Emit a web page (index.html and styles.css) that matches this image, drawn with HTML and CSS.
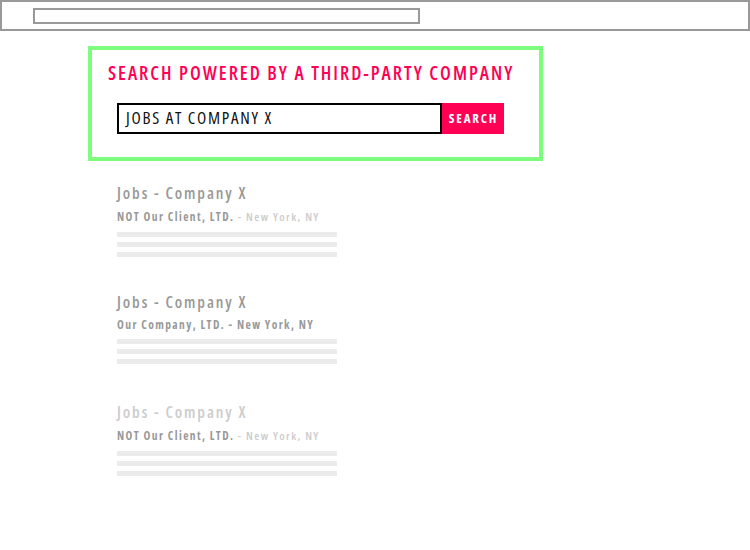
FILE: index.html
```html
<!DOCTYPE html>
<html>
<head>
<meta charset="utf-8">
<link rel="stylesheet" href="styles.css">
</head>
<body>
<header class="topbar">
  <div class="url-box"></div>
</header>
<main class="content">
  <section class="search-panel">
    <h1 class="panel-title">SEARCH POWERED BY A THIRD-PARTY COMPANY</h1>
    <div class="search-row">
      <div class="search-input">JOBS AT COMPANY X</div>
      <div class="search-btn">SEARCH</div>
    </div>
  </section>
  <ul class="results">
    <li class="result">
      <div class="r-title">Jobs - Company X</div>
      <div class="r-sub">NOT Our Client, LTD. <span class="loc">- New York, NY</span></div>
      <div class="r-lines"><span></span><span></span><span></span></div>
    </li>
    <li class="result ours">
      <div class="r-title">Jobs - Company X</div>
      <div class="r-sub">Our Company, LTD. - New York, NY</div>
      <div class="r-lines"><span></span><span></span><span></span></div>
    </li>
    <li class="result faded">
      <div class="r-title">Jobs - Company X</div>
      <div class="r-sub">NOT Our Client, LTD. <span class="loc">- New York, NY</span></div>
      <div class="r-lines"><span></span><span></span><span></span></div>
    </li>
  </ul>
</main>
</body>
</html>
```
FILE: styles.css
```css
* { box-sizing: border-box; }
html, body { margin: 0; padding: 0; background: #fff; }
body {
  font-family: "Open Sans", "DejaVu Sans Condensed", sans-serif;
  font-stretch: condensed;
  width: 750px;
}
.topbar {
  height: 31px;
  border: 2px solid #999;
  padding: 6px 0 0 31px;
}
.url-box {
  width: 387px;
  height: 16px;
  border: 2px solid #999;
}
.content {
  padding: 15px 0 0 88px;
}
.search-panel {
  width: 455px;
  height: 115px;
  border: 4px solid #7dfc7d;
  padding: 12px 0 0 16px;
}
.panel-title {
  margin: 0;
  font-size: 19px;
  line-height: 22px;
  font-weight: 600;
  letter-spacing: 2px;
  color: #ff0055;
  white-space: nowrap;
}
.search-row {
  display: flex;
  margin: 19px 0 0 9px;
  height: 31px;
}
.search-input {
  width: 325px;
  border: 2px solid #000;
  font-size: 17px;
  line-height: 26px;
  padding-left: 7px;
  color: #111;
  letter-spacing: 1.7px;
}
.search-btn {
  width: 62px;
  background: #ff0055;
  color: #fff;
  font-size: 13px;
  font-weight: 700;
  line-height: 31px;
  text-align: center;
  letter-spacing: 1.8px;
  padding-left: 1px;
}
.results {
  list-style: none;
  margin: 0;
  padding: 21px 0 0 29px;
}
.result {
  height: 110px;
}
.r-title {
  font-size: 16px;
  font-weight: 600;
  line-height: 22px;
  color: #999;
  letter-spacing: 1.9px;
}
.r-sub {
  margin-top: 5px;
  font-size: 11.5px;
  font-weight: 700;
  line-height: 16px;
  color: #999;
  letter-spacing: 1.4px;
}
.r-sub .loc { color: #ccc; font-weight: 600; }
.r-lines {
  margin-top: 7px;
  display: flex;
  flex-direction: column;
  gap: 5px;
  width: 220px;
}
.r-lines span {
  display: block;
  height: 5px;
  background: #ebebeb;
}
.ours .r-title { margin-top: -1px; }
.ours .r-sub { margin-top: 4px; }
.ours .r-lines { margin-top: 6px; }
.faded .r-title { color: #ccc; }
```
